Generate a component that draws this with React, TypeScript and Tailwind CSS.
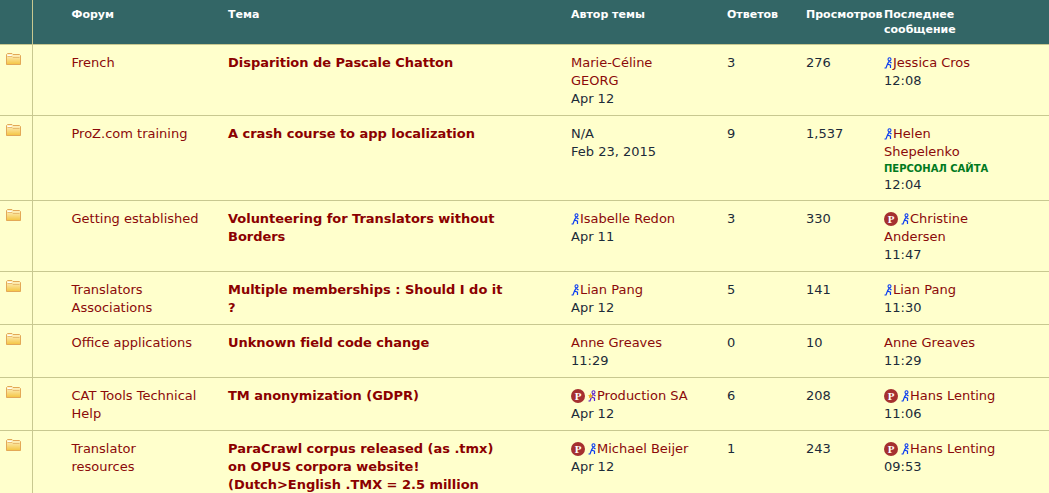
import type { ReactNode } from 'react';

function FolderIcon() {
  return (
    <svg width="15" height="12" viewBox="0 0 15 12" className="block">
      <defs>
        <linearGradient id="folderFill" x1="0" y1="0" x2="0" y2="1">
          <stop offset="0" stopColor="#fff6d0" />
          <stop offset="1" stopColor="#f4c440" />
        </linearGradient>
      </defs>
      <path d="M0.5 1.5 L1.5 0.5 H6 L7 1.5 H13.5 L14.5 2.5 V11.5 H0.5 Z" fill="url(#folderFill)" stroke="#e3a857" />
      <path d="M1.5 3.5 H6 L7 4.5 H13.5" fill="none" stroke="#e8bc70" />
      <path d="M1.5 2.5 H5.5" fill="none" stroke="#ffffff" />
    </svg>
  );
}

function PersonIcon({ star }: { star?: boolean }) {
  const color = star ? '#5a1fd0' : '#0a3cf0';
  return (
    <svg width="9" height="12" viewBox="0 0 9 12" className="inline-block align-[-2px]">
      <circle cx="5.5" cy="2.2" r="1.5" fill="none" stroke={color} strokeWidth="1.1" />
      <path d="M5 4.2 L3.5 7 L6.5 8.2 L6.5 11 M3.5 7 L2 11 H0.5 M5.2 4.5 L7.5 6" fill="none" stroke={color} strokeWidth="1.2" />
      {star && <path d="M2.5 3 L3.3 5 L5 5.2 L3.8 6.5 L4.1 8.2 L2.5 7.3 L0.9 8.2 L1.2 6.5 L0 5.2 L1.7 5 Z" fill="#f0b020" />}
    </svg>
  );
}

function ProBadge() {
  return (
    <span className="inline-flex w-[14px] h-[14px] rounded-full bg-[#a53030] text-white text-[11px] leading-[14px] font-bold items-center justify-center align-[0px] mr-[3px] font-['Liberation_Serif',serif]">
      P
    </span>
  );
}

function User({ name, pro, online, star }: { name: string; pro?: boolean; online?: boolean; star?: boolean }) {
  return (
    <div className="text-[#8b0a0a]">
      {pro && <ProBadge />}
      {online && <PersonIcon star={star} />}
      {name}
    </div>
  );
}

type Row = {
  forum: string;
  topic: string;
  author: ReactNode;
  replies: string;
  views: string;
  last: ReactNode;
};

const rows: Row[] = [
  {
    forum: 'French',
    topic: 'Disparition de Pascale Chatton',
    author: (<><User name="Marie-Céline GEORG" /><div>Apr 12</div></>),
    replies: '3',
    views: '276',
    last: (<><User name="Jessica Cros" online /><div>12:08</div></>),
  },
  {
    forum: 'ProZ.com training',
    topic: 'A crash course to app localization',
    author: (<><div>N/A</div><div>Feb 23, 2015</div></>),
    replies: '9',
    views: '1,537',
    last: (
      <div className="-mb-px">
        <User name="Helen Shepelenko" online />
        <div className="text-[10px] leading-[15px] font-bold whitespace-nowrap text-[#007a1e]">ПЕРСОНАЛ САЙТА</div>
        <div>12:04</div>
      </div>
    ),
  },
  {
    forum: 'Getting established',
    topic: 'Volunteering for Translators without Borders',
    author: (<><User name="Isabelle Redon" online /><div>Apr 11</div></>),
    replies: '3',
    views: '330',
    last: (<><User name="Christine Andersen" pro online /><div>11:47</div></>),
  },
  {
    forum: 'Translators Associations',
    topic: 'Multiple memberships : Should I do it ?',
    author: (<><User name="Lian Pang" online /><div>Apr 12</div></>),
    replies: '5',
    views: '141',
    last: (<><User name="Lian Pang" online /><div>11:30</div></>),
  },
  {
    forum: 'Office applications',
    topic: 'Unknown field code change',
    author: (<><User name="Anne Greaves" /><div>11:29</div></>),
    replies: '0',
    views: '10',
    last: (<><User name="Anne Greaves" /><div>11:29</div></>),
  },
  {
    forum: 'CAT Tools Technical Help',
    topic: 'TM anonymization (GDPR)',
    author: (<><User name="Production SA" pro online star /><div>Apr 12</div></>),
    replies: '6',
    views: '208',
    last: (<><User name="Hans Lenting" pro online /><div>11:06</div></>),
  },
  {
    forum: 'Translator resources',
    topic: 'ParaCrawl corpus released (as .tmx) on OPUS corpora website! (Dutch>English .TMX = 2.5 million',
    author: (<><User name="Michael Beijer" pro online /><div>Apr 12</div></>),
    replies: '1',
    views: '243',
    last: (<><User name="Hans Lenting" pro online /><div>09:53</div></>),
  },
];

export default function App() {
  return (
    <div className="h-[493px] w-[1049px] overflow-hidden bg-white font-['DejaVu_Sans',sans-serif] text-[13px] leading-[18px] text-[#1c2b39]">
      <table className="w-[1049px] table-fixed border-collapse">
        <colgroup>
          <col className="w-[32px]" />
          <col className="w-[196px]" />
          <col className="w-[343px]" />
          <col className="w-[156px]" />
          <col className="w-[79px]" />
          <col className="w-[78px]" />
          <col className="w-[165px]" />
        </colgroup>
        <thead>
          <tr className="h-[44px] bg-[#336666] text-left align-top text-[11px] leading-[15px] font-bold text-white">
            <th className="border-r border-[#c8c890]" />
            <th className="pl-[39px] pt-[7px]">Форум</th>
            <th className="pt-[7px]">Тема</th>
            <th className="pt-[7px]">Автор темы</th>
            <th className="pt-[7px]">Ответов</th>
            <th className="pt-[7px]">Просмотров</th>
            <th className="pr-[60px] pt-[7px]">Последнее сообщение</th>
          </tr>
        </thead>
        <tbody>
          {rows.map((row) => (
            <tr key={row.topic} className="bg-[#ffffcc] align-top border-t border-[#c8c890]">
              <td className="border-r border-[#c8c890] pl-[6px] pt-[8px]">
                <FolderIcon />
              </td>
              <td className="pl-[39px] pr-[28px] pt-[9px] pb-[7px] text-[#8b0a0a]">{row.forum}</td>
              <td className="pr-[63px] pt-[9px] pb-[7px] font-bold tracking-[-0.03px] text-[#8b0000]">{row.topic}</td>
              <td className="pr-[30px] pt-[9px] pb-[7px]">{row.author}</td>
              <td className="pt-[9px] pb-[7px]">{row.replies}</td>
              <td className="pt-[9px] pb-[7px]">{row.views}</td>
              <td className="pr-[49px] pt-[9px] pb-[7px]">{row.last}</td>
            </tr>
          ))}
        </tbody>
      </table>
    </div>
  );
}
